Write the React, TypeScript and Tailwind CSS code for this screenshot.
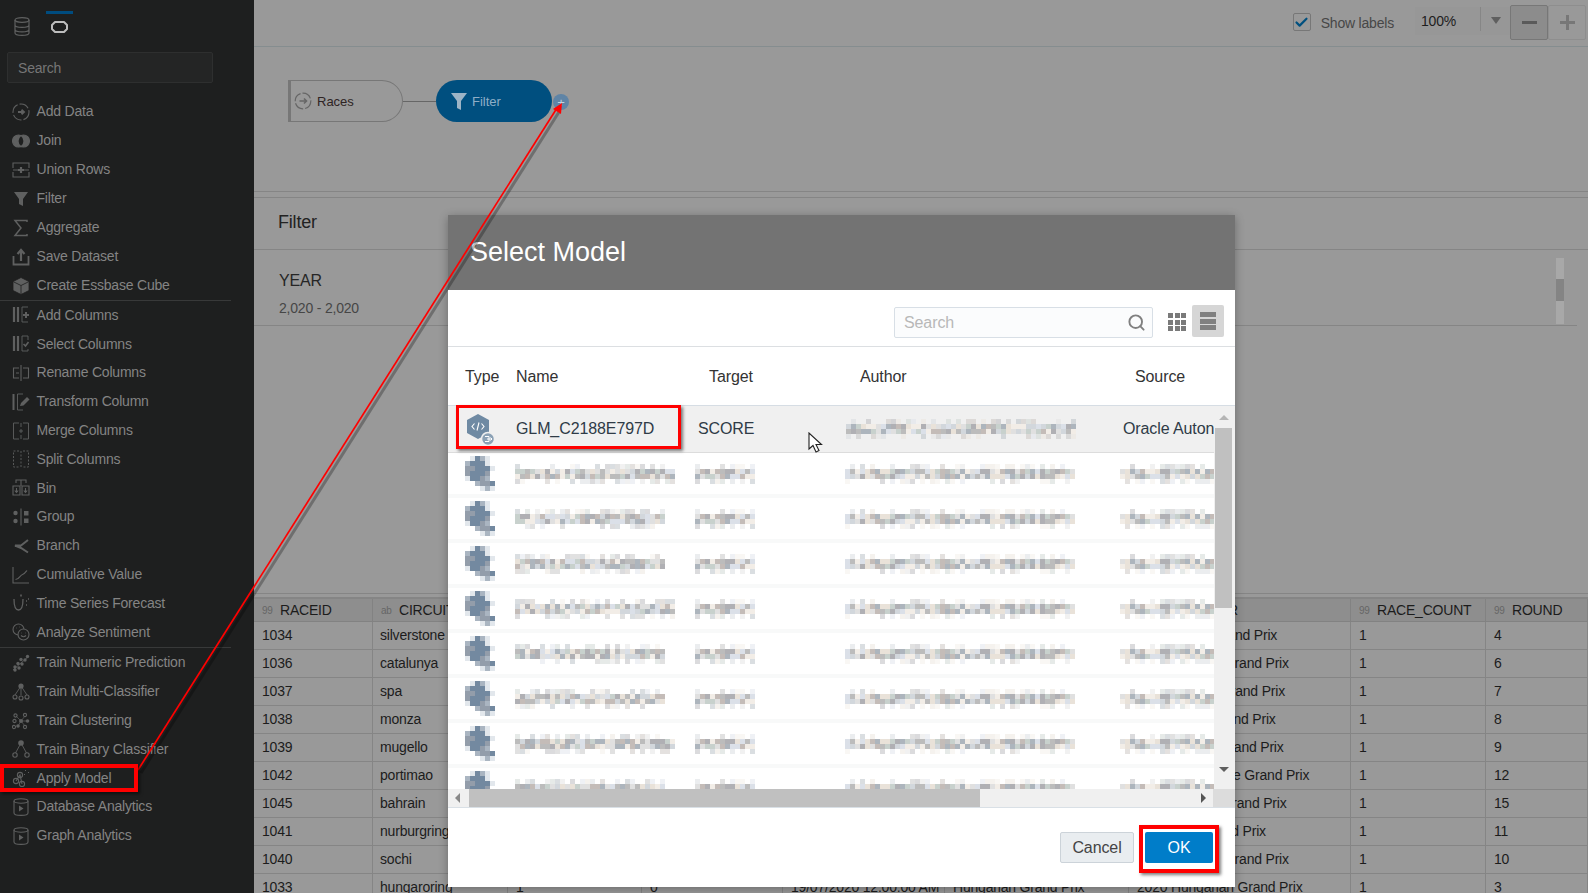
import { Check, Search } from "lucide-react";
import type { ReactNode } from "react";

const sidebarGroups: [string, ReactNode][][] = [
  [
    ["Add Data", <><circle cx="9" cy="9" r="8" strokeDasharray="10 2" /><path d="M6 9h6M9.5 6.8 12 9l-2.5 2.2" strokeWidth="1.8" /></>],
    ["Join", <><circle cx="6.5" cy="9" r="6" fill="currentColor" /><circle cx="11.5" cy="9" r="6" fill="currentColor" /><path d="M9 4.2a6 6 0 0 1 0 9.6 6 6 0 0 1 0-9.6Z" fill="#1e1f1f" stroke="none" /></>],
    ["Union Rows", <><path d="M1 7V2h16v5M1 11v5h16v-5M1 9h5M12 9h5" /><path d="M9 6v6M6 9h6" strokeWidth="2.2" /></>],
    ["Filter", <path d="M2 2h14l-5 7v7l-4-2V9Z" fill="currentColor" stroke="none" />],
    ["Aggregate", <path d="M15 3V1.5H3L9 9l-6 7.5h12V15" strokeWidth="1.5" />],
    ["Save Dataset", <><path d="M1.5 8v8.5h15V8" strokeWidth="1.8" /><path d="M9 13V3M5.5 6 9 2l3.5 4" strokeWidth="2.2" /></>],
    ["Create Essbase Cube", <path d="M9 0.5 17 4.5v9L9 17.5 1 13.5v-9ZM9 8.5 1.5 4.8M9 8.5l7.5-3.7M9 8.5v9" fill="currentColor" stroke="#1e1f1f" strokeWidth="0.8" />],
  ],
  [
    ["Add Columns", <><path d="M2 1v15M6 1v15" strokeWidth="2.2" /><path d="M16 1H10v15h6" strokeWidth="0.9" /><path d="M14 6v6M11 9h6" strokeWidth="2" /></>],
    ["Select Columns", <><path d="M2 1v15M6 1v15" strokeWidth="2.2" /><path d="M16 1H10v15h6V14M16 1v4" strokeWidth="0.9" /><path d="m11.5 9 2 2 3-4" strokeWidth="1.6" /></>],
    ["Rename Columns", <><path d="M7 4H1.5v10H7M11 4h5.5v10H11M9 1v16M4 9h3" /></>],
    ["Transform Column", <><path d="M1.5 1v16" strokeWidth="2" /><path d="M11 1H5.5v16H11" strokeWidth="0.9" /><path d="m8 13 1-3 6-6 2.5 2.5-6 6Z" fill="currentColor" stroke="none" /></>],
    ["Merge Columns", <><path d="M7 1H1.5v16H7M11 1h5.5v16H11M9 1v4M9 13v4M9 7v4M7 9h4" strokeWidth="0.9" /></>],
    ["Split Columns", <><path d="M7 1H1.5v16H7M11 1h5.5v16H11M9 1v16" strokeWidth="0.9" strokeDasharray="2 1.500" /></>],
    ["Bin", <><path d="M4 4V1h10v3M9 1v6" /><path d="M1 7h7v9H1ZM10 7h7v9h-7Z" /><path d="M4.5 9v4M2.8 11.5l1.7 2 1.7-2M13.5 9v4M11.8 11.5l1.7 2 1.7-2" /></>],
    ["Group", <><circle cx="3.5" cy="5" r="2.2" fill="currentColor" stroke="none" /><circle cx="3.5" cy="13" r="2.2" fill="currentColor" stroke="none" /><rect x="12" y="3" width="4.5" height="4.5" fill="currentColor" stroke="none" /><rect x="12" y="10.5" width="4.5" height="4.5" fill="currentColor" stroke="none" /><path d="M9 0.5v17" /></>],
    ["Branch", <path d="M16 3 9 8.5H3L9 11l7 4.5M3 9h6" strokeWidth="2" />],
    ["Cumulative Value", <><path d="M1 1v16h16" /><path d="M3.5 13.5c4 0 4-4 7-5 2-.6 3-2 4.5-4" /></>],
    ["Time Series Forecast", <><path d="M2 5c0 6 1.5 11 4.5 11S11 12 11 5" strokeWidth="1.3" /><path d="M9 0.5v2M14 7h1M14 11h1M16 5h1" strokeWidth="1.6" /></>],
    ["Analyze Sentiment", <><circle cx="6.5" cy="6.5" r="5.5" /><circle cx="11.5" cy="11.5" r="5.5" fill="#1e1f1f" /><path d="M9 12.5c1.5 1.5 3.5 1.5 5 0M9.5 10h.5M13 10h.5M4 5h.5M7.5 4h.5" /></>],
  ],
  [
    ["Train Numeric Prediction", <><path d="M1 16 17 2" strokeWidth="0.8" /><g fill="currentColor" stroke="none"><circle cx="3" cy="13" r="1.7" /><circle cx="7" cy="14" r="1.7" /><circle cx="6" cy="9.5" r="1.7" /><circle cx="10" cy="10" r="1.7" /><circle cx="9" cy="5.5" r="1.7" /><circle cx="13" cy="6" r="1.7" /><circle cx="15.5" cy="2.5" r="1.7" /><circle cx="3" cy="16" r="1.7" /></g></>],
    ["Train Multi-Classifier", <><circle cx="9" cy="3" r="2.6" fill="currentColor" stroke="none" /><path d="M9 3 3 12M9 3v9M9 3l6 9" strokeWidth="0.9" /><circle cx="3" cy="14" r="2" fill="#1e1f1f" /><circle cx="9" cy="15" r="2" fill="#1e1f1f" /><circle cx="15" cy="14" r="2" fill="#1e1f1f" /></>],
    ["Train Clustering", <><g fill="currentColor" stroke="none"><circle cx="9" cy="9" r="2" /><circle cx="15.5" cy="9" r="1.8" /><circle cx="6" cy="14" r="1.8" /></g><path d="M9 9h6M9 9l-3 5M9 9 4 4M9 9l4-5M9 9l4 5" strokeWidth="0.7" /><circle cx="3.5" cy="3.5" r="1.6" /><circle cx="13" cy="3" r="1.6" /><circle cx="2.5" cy="9" r="1.6" /><circle cx="2" cy="15" r="1.6" /><circle cx="13" cy="15" r="1.6" /></>],
    ["Train Binary Classifier", <><circle cx="9" cy="3" r="2.8" fill="currentColor" stroke="none" /><path d="M9 3 3.5 13M9 3l5.5 10" strokeWidth="0.9" /><circle cx="3" cy="15" r="2.2" fill="#1e1f1f" /><circle cx="15" cy="15" r="2.2" fill="#1e1f1f" /></>],
    ["Apply Model", <><circle cx="4" cy="12" r="2.6" /><circle cx="10" cy="15" r="2.6" /><circle cx="8" cy="6" r="2.6" /><path d="M4 12 8 6l2 9" /><path d="M13 1l1 1M16 3l1 1M12 5l1 1" strokeWidth="1" /></>],
    ["Database Analytics", <><ellipse cx="9" cy="3" rx="7" ry="2.2" /><path d="M2 3v12c0 1.4 3 2.4 7 2.4s7-1 7-2.4V3" /><path d="M7 7.5v6l4.5-3Z" fill="currentColor" stroke="none" /></>],
    ["Graph Analytics", <><ellipse cx="9" cy="3" rx="7" ry="2.2" /><path d="M2 3v12c0 1.4 3 2.4 7 2.4s7-1 7-2.4V3" /><path d="M7 7.5v6l4.5-3Z" fill="currentColor" stroke="none" /></>],
  ],
];

const columns = [
  ["99", "RACEID"],
  ["ab", "CIRCUITREF"],
  ["99", "POINTS"],
  ["99", "LAPS"],
  ["ab", "RACE_DATE"],
  ["ab", "RACE_NAME"],
  ["ab", "RACE_YEAR"],
  ["99", "RACE_COUNT"],
  ["99", "ROUND"],
];

const races = [
  ["1034", "silverstone", "British Grand Prix", "4"],
  ["1036", "catalunya", "Spanish Grand Prix", "6"],
  ["1037", "spa", "Belgian Grand Prix", "7"],
  ["1038", "monza", "Italian Grand Prix", "8"],
  ["1039", "mugello", "Tuscan Grand Prix", "9"],
  ["1042", "portimao", "Portuguese Grand Prix", "12"],
  ["1045", "bahrain", "Bahrain Grand Prix", "15"],
  ["1041", "nurburgring", "Eifel Grand Prix", "11"],
  ["1040", "sochi", "Russian Grand Prix", "10"],
  ["1033", "hungaroring", "Hungarian Grand Prix", "3"],
];

const mosaicColors = ["#bcbcbc", "#d2d7dc", "#e9e2d9", "#b0b0b4", "#dbe0e8", "#c8d1cd", "#f2ede7", "#adb5bd", "#c4bcb8", "#e0e0e0"];

// pixelated stand-in for the redacted values
function Mosaic({ width, seed }: { width: number; seed: number }) {
  const cells: ReactNode[] = [];
  let s = seed * 7919 + 17;
  for (let y = 0; y < 4; y++) {
    for (let x = 0; x < width; x++) {
      s = (s * 1103515245 + 12345) & 0x7fffffff;
      const r = (s >> 8) % 100;
      const edge = y === 0 || y === 3;
      if (edge && r < 45) continue;
      const c = mosaicColors[(s >> 16) % mosaicColors.length];
      cells.push(<rect key={`${x}-${y}`} x={x * 5} y={y * 5} width="5" height="5" fill={c} opacity={edge ? 0.45 : 1} />);
    }
  }
  return (
    <svg width={width * 5} height="20" className="block">
      {cells}
    </svg>
  );
}

const iconPattern = ["0ldsl0", "sdddl0", "mmdddl", "mdddm0", "lddms0", "00smmd", "000lsl"];
const iconColors: Record<string, string> = { l: "#e2e7ec", s: "#aab5c1", d: "#7389a0", m: "#939daa" };

function IconMosaic() {
  return (
    <svg width="30" height="35" className="block">
      {iconPattern.map((row, y) =>
        row.split("").map((c, x) => (c === "0" ? null : <rect key={`${x}-${y}`} x={x * 5} y={y * 5} width="5" height="5" fill={iconColors[c]} />))
      )}
    </svg>
  );
}

function SidebarItem({ label, icon, first }: { label: string; icon: ReactNode; first: boolean }) {
  return (
    <div className={`flex items-center pl-[12px] ${first ? "h-[29px]" : "h-[28.8px]"}`}>
      <svg width="18" height="18" viewBox="0 0 18 18" fill="none" stroke="currentColor" strokeWidth="1.1" className="shrink-0 text-[#5f6060]">
        {icon}
      </svg>
      <span className="ml-[6.5px] text-[14px] tracking-[-0.2px] text-[#848484]">{label}</span>
    </div>
  );
}

function Sidebar() {
  return (
    <aside className="flex h-full w-[254px] shrink-0 flex-col bg-[#1e1f1f]">
      <div className="flex h-[52px] items-start pl-[14px]">
        <svg width="16" height="19" viewBox="0 0 16 19" fill="none" stroke="#5f6060" strokeWidth="1.2" className="mt-[17px]">
          <ellipse cx="8" cy="3" rx="7" ry="2.3" />
          <path d="M1 3v13c0 1.4 3 2.4 7 2.4s7-1 7-2.4V3M1 8c0 1.4 3 2.4 7 2.4S15 9.400 15 8M1 12.500c0 1.400 3 2.400 7 2.400s7-1 7-2.400" />
        </svg>
        <div className="ml-[16px] mt-[11px] flex w-[27px] flex-col items-center border-t-[3px] border-[#004c7f]">
          <svg width="19" height="14" viewBox="0 0 19 14" fill="none" stroke="#bdbdbd" strokeWidth="2" className="mt-[6px]">
            <path d="M5 2h9l3 3v4l-3 3H5L2 9V5Z" strokeLinejoin="round" />
          </svg>
        </div>
      </div>
      <div className="ml-[7px] flex h-[31px] w-[206px] items-center rounded-[2px] border border-[#2e2f2f] bg-[#242525] pl-[10px] pt-[1px] text-[14px] tracking-[-0.2px] text-[#767676]">Search</div>
      <div className="mt-[14px] flex flex-col">
        {sidebarGroups.map((group, i) => (
          <div key={i} className={i === 0 ? "mr-[23px] border-b border-[#383939]" : i === 1 ? "mb-[1px] mr-[23px] border-b border-[#383939]" : ""}>
            <div className="-mr-[23px]">
              {group.map(([label, icon]) => (
                <SidebarItem key={label} label={label} icon={icon} first={i === 0} />
              ))}
            </div>
          </div>
        ))}
      </div>
    </aside>
  );
}

function Toolbar() {
  return (
    <div className="flex h-[47px] shrink-0 items-start justify-end border-b border-[#858d8f] pr-[2px]">
      <div className="mt-[13px] flex h-[18px] w-[18px] items-center justify-center rounded-[2px] border border-[#777]">
        <Check size={15} strokeWidth={3.5} className="text-[#00507f]" />
      </div>
      <span className="ml-[10px] mt-[13px] text-[14px] tracking-[-0.2px] text-[#474747]">Show labels</span>
      <div className="ml-[21px] mt-[7px] flex h-[28px] w-[95px] items-start bg-[#979797] pl-[6px] text-[14px] tracking-[-0.2px] text-[#1e1e1e]">
        <span className="mt-[4px] w-[59px]">100%</span>
        <span className="h-[24px] border-l border-[#868686]" />
        <span className="ml-[10px] mt-[10px] h-0 w-0 border-x-[5px] border-t-[7px] border-x-transparent border-t-[#5f5f5f]" />
      </div>
      <div className="mt-[5px] flex h-[35px] w-[38px] items-center justify-center rounded-[2px] border border-[#777] bg-[#8c8c8c]">
        <span className="h-[3px] w-[15px] bg-[#5a5a5a]" />
      </div>
      <div className="relative mt-[5px] flex h-[35px] w-[38px] items-center justify-center rounded-[2px] border border-[#8e8e8e]">
        <span className="h-[3px] w-[15px] bg-[#777]" />
        <span className="absolute h-[15px] w-[3px] bg-[#777]" />
      </div>
    </div>
  );
}

function Canvas() {
  return (
    <div className="flex h-[145px] shrink-0 items-start border-b border-[#858585] pl-[34px] pt-[33px]">
      <div className="flex h-[42px] w-[115px] items-center rounded-r-[22px] border border-l-[3px] border-[#777] pl-[3px]">
        <svg width="18" height="18" viewBox="0 0 18 18" fill="none" stroke="#666" strokeWidth="1.2">
          <circle cx="9" cy="9" r="7.800" strokeDasharray="10 2" />
          <path d="M5.500 9h7M10 6.500 12.500 9 10 11.500" strokeWidth="1.600" />
        </svg>
        <span className="ml-[5px] pt-[2px] text-[13px] text-[#2e2424]">Races</span>
      </div>
      <span className="mt-[21px] h-px w-[33px] bg-[#666]" />
      <div className="flex h-[42px] w-[116px] items-center rounded-full bg-[#004f7f] pl-[15px]">
        <svg width="16" height="17" viewBox="0 0 16 17" fill="#9db4c6">
          <path d="M0 0h16l-6 8v9l-4-2V8Z" />
        </svg>
        <span className="ml-[5px] pt-[2px] text-[13px] text-[#8eaec6]">Filter</span>
      </div>
      <div className="ml-px mt-[14px] flex h-[16px] w-[16px] items-center justify-center rounded-full bg-[#5f84a6] text-[13px] leading-none text-[#c3d2de]">+</div>
    </div>
  );
}

function FilterPanel() {
  return (
    <>
      <div className="h-[6px] shrink-0 border-b border-[#858585]" />
      <div className="flex h-[52px] shrink-0 items-center border-b border-[#858585] pb-[2px] pl-[24px] text-[18px] tracking-[-0.2px] text-[#222]">Filter</div>
      <div className="mr-[11px] flex h-[76px] shrink-0 justify-between border-b border-[#858585] pl-[25px]">
        <div>
          <div className="mt-[21px] text-[16px] leading-[20px] tracking-[-0.2px] text-[#262626]">YEAR</div>
          <div className="mt-[8px] text-[14px] leading-[18px] tracking-[-0.2px] text-[#464646]">2,020 - 2,020</div>
        </div>
        <div className="mr-[13px] mt-[8px] flex h-[66px] w-[8px] flex-col bg-[#a8a8a8]">
          <span className="mt-[21px] h-[22px] w-full bg-[#848484]" />
        </div>
      </div>
      <div className="h-[268px] shrink-0 border-b border-[#858585]" />
      <div className="h-[5px] shrink-0 border-b-2 border-[#858585]" />
    </>
  );
}

function DataTable() {
  const grid = "grid grid-cols-[119px_135px_134px_141px_162px_184px_222px_135px_102px]";
  return (
    <div className="shrink-0 tracking-[-0.2px]">
      <div className={`${grid} h-[23px] bg-[#8e8e8e]`}>
        {columns.map(([kind, name]) => (
          <div key={name} className="flex items-center overflow-hidden whitespace-nowrap border-r border-b border-[#828282] pl-[8px] pt-[1px]">
            <span className="w-[18px] shrink-0 text-[10px] text-[#666]">{kind}</span>
            <span className="text-[14px] text-[#1c1c1c]">{name}</span>
          </div>
        ))}
      </div>
      {races.map(([id, circuit, race, round]) => (
        <div key={id} className={`${grid} h-[28px] text-[14px] text-[#1c1c1c]`}>
          {[id, circuit, "1", "0", "19/07/2020 12:00:00 AM", race, `2020 ${race}`, "1", round].map((v, i) => (
            <div key={i} className={`flex items-center overflow-hidden whitespace-nowrap border-r border-b border-[#858585] ${i === 1 ? "pl-[7px]" : "pl-[8px]"}`}>
              {v}
            </div>
          ))}
        </div>
      ))}
    </div>
  );
}

function SelectModelDialog() {
  const head = ["Type", "Name", "Target", "Author", "Source"];
  return (
    <div className="absolute left-[448px] top-[215px] flex h-[672px] w-[787px] flex-col bg-white shadow-[0_2px_9px_rgba(0,0,0,0.3)]">
      <div className="flex h-[75px] shrink-0 items-center bg-[#737373] pl-[22px] text-[27px] text-white">Select Model</div>
      <div className="flex h-[57px] shrink-0 items-start border-b border-[#dcdfe2] pl-[446px]">
        <div className="mt-[17px] flex h-[31px] w-[259px] items-center justify-between rounded-[2px] border border-[#d8dfe6] bg-[#fbfcfd] pl-[9px] pr-[6px] text-[16px] tracking-[-0.1px] text-[#b8b8b8]">
          Search
          <Search size={19} strokeWidth={2.4} className="text-[#808080]" />
        </div>
        <div className="ml-[15px] mt-[23px] grid grid-cols-3 gap-[1.500px]">
          {Array.from({ length: 9 }).map((_, i) => (
            <span key={i} className="h-[5px] w-[5px] bg-[#7a7a7a]" />
          ))}
        </div>
        <div className="ml-[6px] mt-[15px] flex h-[32px] w-[32px] flex-col items-center justify-center gap-[1.500px] rounded-[2px] bg-[#d6d6d6]">
          <span className="h-[5px] w-[16px] bg-[#808080]" />
          <span className="h-[5px] w-[16px] bg-[#808080]" />
          <span className="h-[5px] w-[16px] bg-[#808080]" />
        </div>
      </div>
      <div className="grid h-[59px] shrink-0 grid-cols-[51px_193px_151px_275px_1fr] items-center border-b border-[#d6dde4] pl-[17px] pt-[2px] text-[16px] tracking-[-0.1px] text-[#333]">
        {head.map((h) => (
          <span key={h}>{h}</span>
        ))}
      </div>
      <div className="flex h-[383px] shrink-0">
        <div className="w-[766px] overflow-hidden">
          <div className="grid h-[47px] grid-cols-[50px_182px_148px_277px_1fr] items-center overflow-hidden whitespace-nowrap border-b border-[#dcdcdc] bg-[#f0f0f0] pl-[18px] text-[16px] tracking-[-0.1px] text-[#2f3b47]">
            <svg width="32" height="34" viewBox="0 0 32 34" className="mt-[1px]">
              <path d="M12 1 23 7v13l-11 6L1 20V7Z" fill="#6f8aa3" />
              <path d="M8.500 10.500 6 13.500l2.500 3M15.500 10.500 18 13.500l-2.500 3M13 9.500l-2 8" fill="none" stroke="#fff" strokeWidth="1.100" />
              <circle cx="22" cy="26" r="6.500" fill="#8ba1b5" stroke="#f0f0f0" strokeWidth="1.500" />
              <path d="M19 23.500h4v5h-4M21 26h5M24.500 24.500 26 26l-1.500 1.500" fill="none" stroke="#fff" strokeWidth="1" />
            </svg>
            <span>GLM_C2188E797D</span>
            <span>SCORE</span>
            <Mosaic width={46} seed={99} />
            <span className="overflow-hidden">Oracle Auton</span>
          </div>
          {[1, 2, 3, 4, 5, 6, 7, 8].map((n) => (
            <div key={n} className="grid h-[45px] grid-cols-[50px_180px_150px_275px_1fr] items-center overflow-hidden border-b-[4px] border-[#f8f9f9] pl-[17px]">
              <IconMosaic />
              <Mosaic width={n % 3 === 1 ? 32 : 30} seed={n * 3} />
              <Mosaic width={12} seed={5} />
              <Mosaic width={46} seed={11} />
              <div className="overflow-hidden">
                <Mosaic width={19} seed={23} />
              </div>
            </div>
          ))}
        </div>
        <div className="flex w-[21px] flex-col items-center bg-[#f0f0f0] pr-[2px]">
          <span className="mt-[9px] h-0 w-0 border-x-[5px] border-b-[5px] border-x-transparent border-b-[#b5b5b5]" />
          <span className="mt-[8px] h-[180px] w-[17px] bg-[#c0c0c0]" />
          <span className="mt-[159px] h-0 w-0 border-x-[5px] border-t-[5px] border-x-transparent border-t-[#5f5f5f]" />
        </div>
      </div>
      <div className="flex h-[19px] shrink-0 items-center border-b border-[#d9e0e6] bg-[#f0f0f0]">
        <span className="ml-[7px] h-0 w-0 border-y-[5px] border-r-[5px] border-y-transparent border-r-[#888]" />
        <span className="ml-[9px] h-full w-[511px] bg-[#c0c0c0]" />
        <span className="ml-[221px] h-0 w-0 border-y-[5px] border-l-[5px] border-y-transparent border-l-[#555]" />
        <span className="ml-[7px] h-full flex-1 bg-[#dcdcdc]" />
      </div>
      <div className="flex flex-1 items-center justify-end gap-[11px] pr-[22px] text-[16px] tracking-[-0.1px]">
        <button className="h-[31px] w-[74px] rounded-[2px] border border-[#ccd3d9] bg-[#e9edf0] text-[#444]">Cancel</button>
        <button className="h-[31px] w-[68px] rounded-[2px] bg-[#007dc9] text-white">OK</button>
      </div>
    </div>
  );
}

// screenshot annotations drawn on top of the page
function Annotations() {
  const box = "absolute border-[#f00] shadow-[2px_2px_3px_rgba(0,0,0,0.5)]";
  return (
    <>
      <svg width="1588" height="893" className="pointer-events-none absolute left-0 top-0">
        <path d="M141 773 559 112" stroke="#000" strokeOpacity="0.28" strokeWidth="3" />
        <path d="M138 770 557 108" stroke="#f00" strokeWidth="1.700" />
        <path d="M562 103 553 109 561 114Z" fill="#f00" />
      </svg>
      <div className={`${box} left-0 top-[764px] h-[28px] w-[138px] border-[4px]`} />
      <div className={`${box} left-[456px] top-[405px] h-[44px] w-[225px] border-[3px]`} />
      <div className={`${box} left-[1139px] top-[825px] h-[48px] w-[80px] border-[4px]`} />
      <svg width="15" height="21" viewBox="0 0 15 21" className="absolute left-[808px] top-[432px]">
        <path d="M1 1v16l4-3.500 3 6.500 3-1.500-3-6h5.500Z" fill="#fff" stroke="#222" strokeWidth="1.100" />
      </svg>
    </>
  );
}

export default function App() {
  return (
    <div className="relative flex h-[893px] w-[1588px] overflow-hidden bg-[#999] [font-family:'Liberation_Sans',Arial,sans-serif]">
      <Sidebar />
      <main className="flex h-full min-w-0 flex-1 flex-col overflow-hidden">
        <Toolbar />
        <Canvas />
        <FilterPanel />
        <DataTable />
      </main>
      <SelectModelDialog />
      <Annotations />
    </div>
  );
}
